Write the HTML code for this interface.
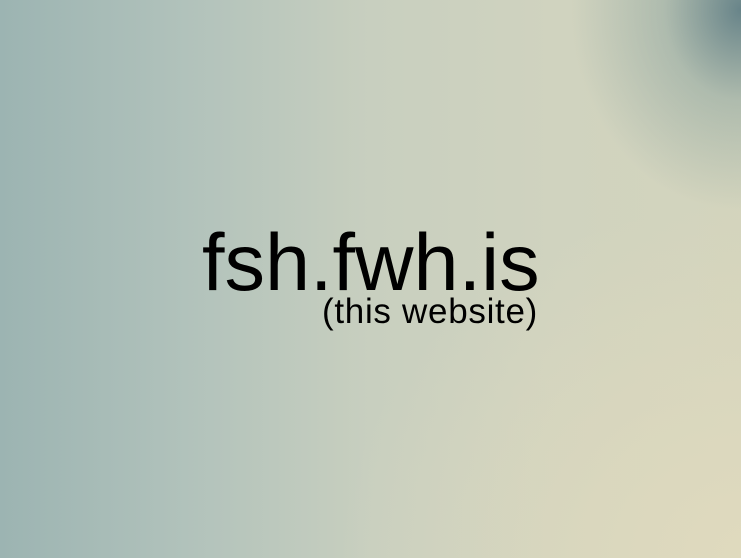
<!DOCTYPE html>
<html><head><style>
html,body{margin:0;padding:0;width:741px;height:558px;overflow:hidden}
body{position:relative;font-family:"Liberation Sans",sans-serif;
background:
radial-gradient(ellipse 170px 200px at 741px 10px, rgba(85,118,128,0.85), rgba(120,150,150,0.4) 45%, rgba(200,205,190,0) 100%),
radial-gradient(ellipse 420px 360px at 760px 560px, rgba(224,218,190,1), rgba(220,216,190,0) 100%),
linear-gradient(90deg,#9cb4b2 0%,#b1c2bb 25%,#c8cfbf 50%,#d0d3bf 75%,#d3d4bd 100%);}
.t{position:absolute;left:202px;top:218px;font-size:81px;line-height:90px;letter-spacing:0px;color:#000;white-space:nowrap}
.s{position:absolute;right:203px;top:292px;font-size:35px;line-height:40px;letter-spacing:0.7px;color:#000;white-space:nowrap}
</style></head><body>
<div class="t">fsh.fwh.is</div>
<div class="s">(this website)</div>
</body></html>
